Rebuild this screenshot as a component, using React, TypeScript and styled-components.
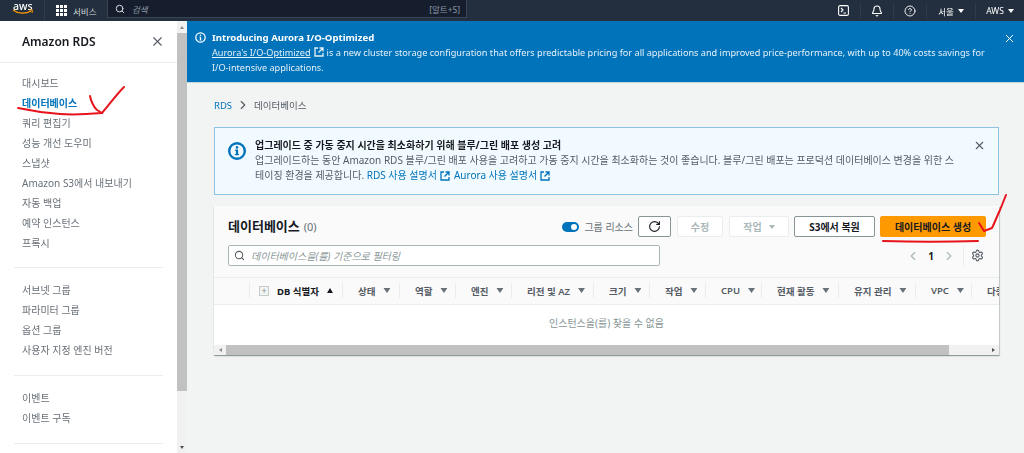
import styled, { createGlobalStyle } from "styled-components";
import { RotateCw, Search, Settings, ChevronLeft, ChevronRight, X, HelpCircle, Bell } from "lucide-react";

const GlobalStyle = createGlobalStyle`
    html, body {
        margin: 0;
        padding: 0;
        background: #f2f3f3;
    }
    * {
        box-sizing: border-box;
    }
    body {
        font-family: "Noto Sans", "Noto Sans CJK KR", sans-serif;
    }
`;

const Page = styled.div`
    position: relative;
    width: 1024px;
    height: 453px;
    overflow: hidden;
    display: flex;
    flex-direction: column;
    filter: blur(0.4px);
`;

/* top bar */
const TopBar = styled.header`
    height: 21px;
    flex: none;
    background: #232f3e;
    display: flex;
    align-items: center;
    color: #d5dbdb;
    font-size: 8.5px;
`;

const Logo = styled.div`
    width: 45px;
    height: 21px;
    padding: 1px 0 0 13px;
    position: relative;
    color: #fff;
    font-size: 10.5px;
    line-height: 10px;
    font-weight: 500;
    border-right: 1px solid #2f3b4a;
`;

const Services = styled.div`
    width: 62px;
    padding-left: 11px;
    display: flex;
    align-items: center;
    gap: 6px;
`;

const SearchBar = styled.div`
    width: 360px;
    height: 18px;
    margin-top: -3px;
    background: #161e2d;
    border: 1px solid #3b4655;
    border-top: none;
    display: flex;
    align-items: center;
    padding: 0 6px 0 7px;
    color: #8d99a8;
    font-size: 8.5px;
`;

const SearchHint = styled.span`
    margin-left: 7px;
    font-style: italic;
    flex: 1;
`;

const TopIcons = styled.div`
    margin-left: auto;
    display: flex;
    align-items: center;
    height: 21px;
`;

const TopCell = styled.div<{ $w: number }>`
    width: ${(p) => p.$w}px;
    height: 16px;
    display: flex;
    align-items: center;
    justify-content: center;
    gap: 4px;
    color: #fff;
    border-left: 1px solid #2f3b4a;
    &:first-child {
        border-left: none;
    }
`;

const Caret = styled.span`
    display: inline-block;
    border-left: 3px solid transparent;
    border-right: 3px solid transparent;
    border-top: 4px solid currentColor;
`;

/* body */
const Body = styled.div`
    flex: 1;
    display: flex;
    min-height: 0;
    box-shadow: inset 0 1px 0 #1a2430;
`;

const Sidebar = styled.nav`
    width: 177px;
    flex: none;
    background: #fff;
    color: #687078;
    font-size: 10px;
`;

const SideHeader = styled.div`
    height: 42px;
    border-bottom: 1px solid #eaeded;
    display: flex;
    align-items: center;
    justify-content: space-between;
    padding: 0 12px 0 22px;
    color: #16191f;
    font-size: 12px;
    font-weight: 600;
`;

const SideList = styled.ul`
    list-style: none;
    margin: 0 14px;
    padding: 12px 0 15px 8px;
    border-bottom: 1px solid #eaeded;
    &:nth-child(2) {
        padding: 10px 0 14px 8px;
    }
`;

const SideItem = styled.li<{ $active?: boolean }>`
    height: 20px;
    line-height: 20px;
    white-space: nowrap;
    color: ${(p) => (p.$active ? "#0073bb" : "#687078")};
    font-weight: ${(p) => (p.$active ? 700 : 400)};
`;

const Track = styled.div`
    width: 10px;
    flex: none;
    background: #f1f1f1;
    display: flex;
    flex-direction: column;
    align-items: center;
    color: #505050;
`;

const TrackEnd = styled.div`
    height: 12px;
    display: flex;
    align-items: center;
    justify-content: center;
    flex: none;
`;

const Thumb = styled.div`
    width: 10px;
    height: 358px;
    flex: none;
    background: #c1c1c1;
`;

const TrackFill = styled.div`
    flex: 1;
`;

const ArrowUp = styled.span`
    border-left: 2.5px solid transparent;
    border-right: 2.5px solid transparent;
    border-bottom: 3px solid #8a8a8a;
`;

const ArrowDown = styled.span`
    border-left: 2.5px solid transparent;
    border-right: 2.5px solid transparent;
    border-top: 3px solid #505050;
`;

const Main = styled.main`
    flex: 1;
    min-width: 0;
    background: #f2f3f3;
`;

const Banner = styled.div`
    height: 62px;
    background: #0073bb;
    border-bottom: 1px solid #c5d5dd;
    color: #fff;
    font-size: 9.15px;
    line-height: 15px;
    display: flex;
    padding: 9px 8px 0 8px;
    gap: 6px;
`;

const BannerText = styled.div`
    flex: 1;
    color: #e6f2f8;
`;

const BannerTitle = styled.div`
    font-size: 9.6px;
    font-weight: 700;
    color: #fff;
`;

const BannerLink = styled.span`
    text-decoration: underline;
`;

const Crumbs = styled.div`
    height: 44px;
    padding: 0 0 0 27px;
    display: flex;
    align-items: center;
    gap: 4px;
    font-size: 9.5px;
    color: #545b64;
`;

const CrumbLink = styled.span`
    color: #0073bb;
`;

const Content = styled.div`
    margin: 0 25px 0 27px;
    display: flex;
    flex-direction: column;
    gap: 11px;
`;

const Alert = styled.div`
    height: 68px;
    background: #f1faff;
    border: 1px solid #8fc3e3;
    display: flex;
    padding: 10px 12px 0 13px;
    font-size: 10px;
    line-height: 15px;
    color: #545b64;
`;

const AlertIcon = styled.div`
    margin: 4px 9px 0 0;
    flex: none;
`;

const AlertBody = styled.div`
    flex: 1;
    margin-right: 11px;
`;

const AlertTitle = styled.div`
    color: #16191f;
    font-weight: 700;
`;

const AlertLink = styled.span`
    color: #0073bb;
    display: inline-flex;
    align-items: center;
    gap: 3px;
    margin-right: 4px;
`;

const Card = styled.section`
    background: #fff;
    box-shadow: 0 1px 1px 0 rgba(0, 28, 36, 0.3), 1px 1px 1px 0 rgba(0, 28, 36, 0.15);
`;

const CardHead = styled.div`
    background: #fafafa;
    height: 72px;
    padding: 10px 13px 0 14px;
    border-bottom: 1px solid #eaeded;
`;

const CardRow = styled.div`
    display: flex;
    align-items: center;
    height: 21px;
`;

const FilterRow = styled(CardRow)`
    margin-top: 8px;
`;

const CardTitle = styled.h2`
    margin: 0 0 3px;
    font-size: 13px;
    font-weight: 700;
    color: #16191f;
    flex: 1;
`;

const Count = styled.span`
    font-weight: 400;
    color: #687078;
    font-size: 11px;
    margin-left: 4px;
`;

const Toggle = styled.span`
    width: 17px;
    height: 10px;
    border-radius: 5px;
    background: #0073bb;
    position: relative;
    margin-right: 5px;
    &::after {
        content: "";
        position: absolute;
        top: 2px;
        right: 2px;
        width: 6px;
        height: 6px;
        border-radius: 50%;
        background: #fff;
    }
`;

const ToggleLabel = styled.span`
    font-size: 10px;
    color: #687078;
    margin-right: 5px;
`;

const Btn = styled.button<{ $w: number; $gap?: number; $variant?: "disabled" | "primary" }>`
    width: ${(p) => p.$w}px;
    height: 21px;
    margin-right: ${(p) => p.$gap ?? 5}px;
    padding: 0;
    display: flex;
    align-items: center;
    justify-content: center;
    gap: 7px;
    font-family: inherit;
    font-size: 10px;
    font-weight: 700;
    border-radius: 2px;
    border: 1px solid
        ${(p) =>
            p.$variant === "primary" ? "#ff9900" : p.$variant === "disabled" ? "#eaeded" : "#879596"};
    background: ${(p) => (p.$variant === "primary" ? "#ff9900" : "#fff")};
    color: ${(p) => (p.$variant === "disabled" ? "#aab7b8" : "#16191f")};
    &:last-child {
        margin-right: 0;
    }
`;

const FilterBox = styled.div`
    width: 432px;
    height: 21px;
    background: #fff;
    border: 1px solid #aab7b8;
    border-radius: 2px;
    display: flex;
    align-items: center;
    padding: 0 5px;
    gap: 6px;
    font-size: 10px;
    font-style: italic;
    color: #879596;
`;

const Pager = styled.div`
    margin: 0 2px 0 auto;
    display: flex;
    align-items: center;
    color: #16191f;
    font-size: 10px;
    font-weight: 700;
    height: 21px;
`;

const PagerNum = styled.span`
    margin: 0 8px;
`;

const PagerGear = styled.div`
    border-left: 1px solid #eaeded;
    margin-left: 7px;
    padding-left: 7px;
    height: 21px;
    display: flex;
    align-items: center;
    color: #545b64;
`;

const Columns = styled.div`
    height: 27px;
    background: #fafafa;
    border-bottom: 1px solid #eaeded;
    padding-left: 35px;
    display: flex;
    overflow: hidden;
`;

const Column = styled.div<{ $w: number }>`
    width: ${(p) => p.$w}px;
    flex: none;
    height: 15px;
    margin-top: 5px;
    padding-left: 15px;
    display: flex;
    align-items: center;
    gap: 6px;
    border-left: 1px solid #eaeded;
    font-size: 9.5px;
    color: #545b64;
    font-weight: 600;
    white-space: nowrap;
`;

const IdColumn = styled(Column)`
    color: #16191f;
    font-weight: 700;
    padding-left: 9px;
`;

const PlusBox = styled.span`
    width: 10px;
    height: 10px;
    margin-right: 2px;
    border: 1px solid #c4cccc;
    background: #f2f3f3;
    color: #879596;
    font-size: 9px;
    line-height: 8px;
    text-align: center;
    font-weight: 400;
`;

const SortUp = styled.span`
    margin-left: 2px;
    border-left: 3.5px solid transparent;
    border-right: 3.5px solid transparent;
    border-bottom: 5px solid #16191f;
`;

const SortDown = styled.span`
    width: 7px;
    height: 5px;
    flex: none;
    margin-left: 2px;
    background: #687078;
    clip-path: polygon(0 0, 100% 0, 50% 100%);
`;

const Empty = styled.div`
    height: 40px;
    padding-bottom: 5px;
    background: #fff;
    display: flex;
    align-items: center;
    justify-content: center;
    font-size: 10px;
    color: #879596;
`;

const HScroll = styled.div`
    height: 10px;
    background: #f1f1f1;
    display: flex;
    align-items: center;
`;

const HEnd = styled.div`
    width: 12px;
    flex: none;
    display: flex;
    justify-content: center;
`;

const HThumb = styled.div`
    width: 723px;
    height: 10px;
    background: #c1c1c1;
`;

const HFill = styled.div`
    flex: 1;
`;

const ArrowLeft = styled.span`
    border-top: 2.5px solid transparent;
    border-bottom: 2.5px solid transparent;
    border-right: 3px solid #8a8a8a;
`;

const ArrowRight = styled.span`
    border-top: 2.5px solid transparent;
    border-bottom: 2.5px solid transparent;
    border-left: 3px solid #505050;
`;

const Scribble = styled.svg`
    position: absolute;
    inset: 0;
    width: 1024px;
    height: 453px;
    pointer-events: none;
`;

const GridIcon = () => (
    <svg width="11" height="11" viewBox="0 0 11 11" fill="#fff">
        {[0, 4, 8].flatMap((y) =>
            [0, 4, 8].map((x) => <rect key={`${x}-${y}`} x={x} y={y} width="3" height="3" />)
        )}
    </svg>
);

const Smile = styled.svg`
    position: absolute;
    left: 12px;
    top: 9px;
`;

const ExternalIcon = ({ size = 10 }: { size?: number }) => (
    <svg width={size} height={size} viewBox="0 0 10 10" fill="none" stroke="currentColor" strokeWidth="1.3">
        <path d="M4 1H1v8h8V6" />
        <path d="M5.5 1H9v3.5M9 1 4.5 5.5" />
    </svg>
);

const InlineExternal = styled.span`
    display: inline-flex;
    vertical-align: -1px;
    margin: 0 3px;
`;

const TerminalIcon = () => (
    <svg width="11" height="11" viewBox="0 0 11 11" fill="none" stroke="#fff" strokeWidth="1.1">
        <rect x="0.6" y="0.6" width="9.8" height="9.8" rx="1.5" />
        <path d="M3 3l2 2-2 2M5.5 8H8" />
    </svg>
);

const InfoIcon = () => (
    <svg width="18" height="18" viewBox="0 0 18 18" fill="none">
        <circle cx="9" cy="9" r="7.8" stroke="#0073bb" strokeWidth="2.4" />
        <rect x="7.9" y="7.8" width="2.2" height="5" fill="#0073bb" />
        <rect x="6.9" y="7.6" width="3" height="1.2" fill="#0073bb" />
        <rect x="6.9" y="12" width="4.2" height="1.2" fill="#0073bb" />
        <circle cx="9" cy="5.4" r="1.3" fill="#0073bb" />
    </svg>
);

const BannerInfoIcon = styled.svg`
    flex: none;
    margin-top: 2px;
`;

const BannerInfo = () => (
    <BannerInfoIcon width="11" height="11" viewBox="0 0 11 11" fill="none" stroke="#fff" strokeWidth="1.2">
        <circle cx="5.5" cy="5.5" r="4.7" />
        <path d="M5.5 5v3M4.5 5h1M4.5 8h2M5.5 2.8v1.2" />
    </BannerInfoIcon>
);

const CloseButton = styled.span<{ $top: number }>`
    flex: none;
    display: flex;
    height: 13px;
    margin-top: ${(p) => p.$top}px;
`;

const sideGroups = [
    ["대시보드", "데이터베이스", "쿼리 편집기", "성능 개선 도우미", "스냅샷", "Amazon S3에서 내보내기", "자동 백업", "예약 인스턴스", "프록시"],
    ["서브넷 그룹", "파라미터 그룹", "옵션 그룹", "사용자 지정 엔진 버전"],
    ["이벤트", "이벤트 구독"],
];

const columns = [
    { label: "상태", w: 57 },
    { label: "역할", w: 56 },
    { label: "엔진", w: 56 },
    { label: "리전 및 AZ", w: 82 },
    { label: "크기", w: 56 },
    { label: "작업", w: 56 },
    { label: "CPU", w: 56 },
    { label: "현재 활동", w: 77 },
    { label: "유지 관리", w: 77 },
    { label: "VPC", w: 56 },
    { label: "다중 AZ", w: 70 },
];

export default function App() {
    return (
        <Page>
            <GlobalStyle />
            <TopBar>
                <Logo>
                    aws
                    <Smile width="22" height="6" viewBox="0 0 22 6" fill="none">
                        <path d="M1 1c5 4 13 4 18 1" stroke="#f90" strokeWidth="1.3" />
                        <path d="M17 1h3.4L20 4" stroke="#f90" strokeWidth="1" />
                    </Smile>
                </Logo>
                <Services>
                    <GridIcon />
                    서비스
                </Services>
                <SearchBar>
                    <Search size={10} color="#d5dbdb" strokeWidth={2.4} />
                    <SearchHint>검색</SearchHint>
                    [알트+S]
                </SearchBar>
                <TopIcons>
                    <TopCell $w={33}><TerminalIcon /></TopCell>
                    <TopCell $w={33}><Bell size={12} strokeWidth={2.2} /></TopCell>
                    <TopCell $w={33}><HelpCircle size={12} strokeWidth={1.8} /></TopCell>
                    <TopCell $w={49}>서울 <Caret /></TopCell>
                    <TopCell $w={49}>AWS <Caret /></TopCell>
                </TopIcons>
            </TopBar>
            <Body>
                <Sidebar>
                    <SideHeader>
                        Amazon RDS
                        <X size={15} color="#545b64" strokeWidth={1.8} />
                    </SideHeader>
                    {sideGroups.map((group) => (
                        <SideList key={group[0]}>
                            {group.map((item) => (
                                <SideItem key={item} $active={item === "데이터베이스"}>{item}</SideItem>
                            ))}
                        </SideList>
                    ))}
                </Sidebar>
                <Track>
                    <TrackEnd><ArrowUp /></TrackEnd>
                    <Thumb />
                    <TrackFill />
                    <TrackEnd><ArrowDown /></TrackEnd>
                </Track>
                <Main>
                    <Banner>
                        <BannerInfo />
                        <BannerText>
                            <BannerTitle>Introducing Aurora I/O-Optimized</BannerTitle>
                            <BannerLink>Aurora's I/O-Optimized</BannerLink>
                            <InlineExternal><ExternalIcon /></InlineExternal>
                            is a new cluster storage configuration that offers predictable pricing for all applications and improved price-performance, with up to 40% costs savings for I/O-intensive applications.
                        </BannerText>
                        <CloseButton $top={2}><X size={13} strokeWidth={1.8} /></CloseButton>
                    </Banner>
                    <Crumbs>
                        <CrumbLink>RDS</CrumbLink>
                        <ChevronRight size={14} color="#545b64" />
                        데이터베이스
                    </Crumbs>
                    <Content>
                        <Alert>
                            <AlertIcon><InfoIcon /></AlertIcon>
                            <AlertBody>
                                <AlertTitle>업그레이드 중 가동 중지 시간을 최소화하기 위해 블루/그린 배포 생성 고려</AlertTitle>
                                업그레이드하는 동안 Amazon RDS 블루/그린 배포 사용을 고려하고 가동 중지 시간을 최소화하는 것이 좋습니다. 블루/그린 배포는 프로덕션 데이터베이스 변경을 위한 스테이징 환경을 제공합니다.{" "}
                                <AlertLink>RDS 사용 설명서<ExternalIcon /></AlertLink>
                                <AlertLink>Aurora 사용 설명서<ExternalIcon /></AlertLink>
                            </AlertBody>
                            <CloseButton $top={1}><X size={13} color="#545b64" strokeWidth={2} /></CloseButton>
                        </Alert>
                        <Card>
                            <CardHead>
                                <CardRow>
                                    <CardTitle>데이터베이스<Count>(0)</Count></CardTitle>
                                    <Toggle />
                                    <ToggleLabel>그룹 리소스</ToggleLabel>
                                    <Btn $w={33} $gap={6}><RotateCw size={13} strokeWidth={2} /></Btn>
                                    <Btn $w={46} $gap={6} $variant="disabled">수정</Btn>
                                    <Btn $w={60} $variant="disabled">작업 <Caret /></Btn>
                                    <Btn $w={81}>S3에서 복원</Btn>
                                    <Btn $w={106} $variant="primary">데이터베이스 생성</Btn>
                                </CardRow>
                                <FilterRow>
                                    <FilterBox>
                                        <Search size={11} color="#545b64" strokeWidth={2.2} />
                                        데이터베이스을(를) 기준으로 필터링
                                    </FilterBox>
                                    <Pager>
                                        <ChevronLeft size={14} color="#aab7b8" />
                                        <PagerNum>1</PagerNum>
                                        <ChevronRight size={14} color="#aab7b8" />
                                        <PagerGear><Settings size={13} strokeWidth={2} /></PagerGear>
                                    </Pager>
                                </FilterRow>
                            </CardHead>
                            <Columns>
                                <IdColumn $w={93}><PlusBox>+</PlusBox>DB 식별자<SortUp /></IdColumn>
                                {columns.map((c) => (
                                    <Column key={c.label} $w={c.w}>{c.label}<SortDown /></Column>
                                ))}
                            </Columns>
                            <Empty>인스턴스을(를) 찾을 수 없음</Empty>
                            <HScroll>
                                <HEnd><ArrowLeft /></HEnd>
                                <HThumb />
                                <HFill />
                                <HEnd><ArrowRight /></HEnd>
                            </HScroll>
                        </Card>
                    </Content>
                </Main>
            </Body>
            <Scribble viewBox="0 0 1024 453" fill="none" stroke="#e8141c" strokeWidth="2" strokeLinecap="round" strokeLinejoin="round">
                <path d="M18 108c14 3 28 5 42 6 14 1 30 0 42-1" />
                <path d="M90 96c1 5 4 11 7 14l5 3c7-8 14-18 22-26" />
                <path d="M883 241c30 1 65 1 95 0" />
                <path d="M979 223l5 8 8-3c3-6 5-12 8-18 2-5 4-10 6-15" />
            </Scribble>
        </Page>
    );
}
